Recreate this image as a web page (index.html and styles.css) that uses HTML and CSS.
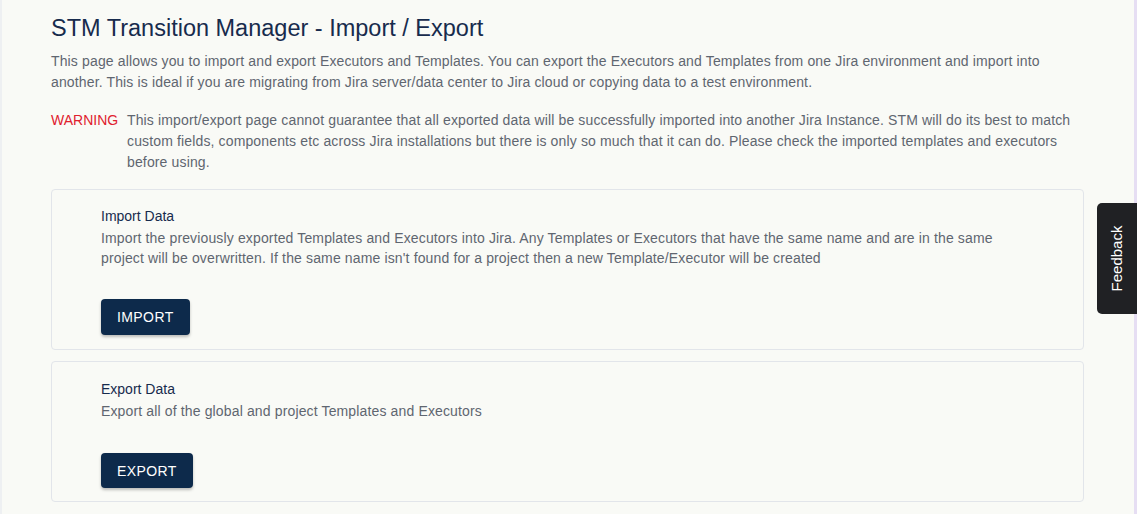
FILE: index.html
```html
<!DOCTYPE html>
<html lang="en">
<head>
	<meta charset="UTF-8">
	<title>STM Transition Manager - Import / Export</title>
	<link rel="stylesheet" href="styles.css">
</head>
<body>
	<div class="page">
		<h1 class="page_title">STM Transition Manager - Import / Export</h1>
		<p class="intro">This page allows you to import and export Executors and Templates. You can export the Executors and Templates from one Jira environment and import into another. This is ideal if you are migrating from Jira server/data center to Jira cloud or copying data to a test environment.</p>

		<!-- 警告 -->
		<div class="warning">
			<span class="warning_label">WARNING</span>
			<p class="warning_text">This import/export page cannot guarantee that all exported data will be successfully imported into another Jira Instance. STM will do its best to match custom fields, components etc across Jira installations but there is only so much that it can do. Please check the imported templates and executors before using.</p>
		</div>

		<!-- 导入 -->
		<div class="card">
			<h2 class="card_title">Import Data</h2>
			<p class="card_desc">Import the previously exported Templates and Executors into Jira. Any Templates or Executors that have the same name and are in the same<br>project will be overwritten. If the same name isn't found for a project then a new Template/Executor will be created</p>
			<button type="button" class="btn">Import</button>
		</div>

		<!-- 导出 -->
		<div class="card card_export">
			<h2 class="card_title">Export Data</h2>
			<p class="card_desc">Export all of the global and project Templates and Executors</p>
			<button type="button" class="btn">Export</button>
		</div>
	</div>

	<a href="###" class="feedback"><span>Feedback</span></a>
</body>
</html>
```

FILE: styles.css
```css
/* 标签样式初始化 */
body{margin:0;padding:0;background:#f9faf6;font-size:14px;font-family:"Liberation Sans",Arial,Helvetica,sans-serif;color:#5f6670;letter-spacing:0.14px;}
h1,h2,p{margin:0;padding:0;}
a{text-decoration:none;}

/* 页面 */
.page{
	min-height: 514px;
	box-sizing: border-box;
	padding: 13px 50px 0 49px;
	border-left: 2px solid #eef0f2;
	border-right: 3px solid #e6def3;
}

.page_title{
	font-size: 23.5px;
	font-weight: normal;
	line-height: 30px;
	letter-spacing: 0;
	color: #172b4d;
}

.intro{
	margin-top: 8px;
	line-height: 21px;
	padding-right: 10px;
}

.warning{
	display: flex;
	margin-top: 17px;
	line-height: 21px;
}

.warning_label{
	width: 76px;
	flex-shrink: 0;
	letter-spacing: 0;
	color: #e0202e;
}

.warning_text{
	flex: 1;
	padding-right: 10px;
}

/* 卡片 */
.card{
	margin-top: 16px;
	padding: 15px 20px 14px 49px;
	border: 1px solid #e2e5ea;
	border-radius: 4px;
}

.card_export{
	margin-top: 11px;
	padding-top: 16px;
	padding-bottom: 13px;
}

.card_title{
	font-size: 14px;
	font-weight: normal;
	line-height: 23px;
	letter-spacing: 0;
	color: #172b4d;
}

.card_desc{
	line-height: 20px;
}

.btn{
	display: block;
	margin-top: 31px;
	height: 36px;
	padding: 0 16px;
	border: 0;
	border-radius: 4px;
	background: #0d2a4b;
	color: #fff;
	font-family: "Liberation Sans",Arial,sans-serif;
	font-size: 14px;
	letter-spacing: 0.4px;
	text-transform: uppercase;
	box-shadow: 0 2px 3px rgba(0,0,0,0.25);
	cursor: pointer;
}

.card_export .btn{
	margin-top: 32px;
	height: 35px;
}

/* 反馈按钮 */
.feedback{
	position: fixed;
	right: 0;
	top: 203px;
	width: 40px;
	height: 111px;
	display: flex;
	align-items: center;
	justify-content: center;
	background: #202124;
	border-radius: 5px 0 0 5px;
	color: #fff;
	font-size: 15px;
	letter-spacing: 0;
}

.feedback span{
	transform: rotate(-90deg);
	white-space: nowrap;
}
```
